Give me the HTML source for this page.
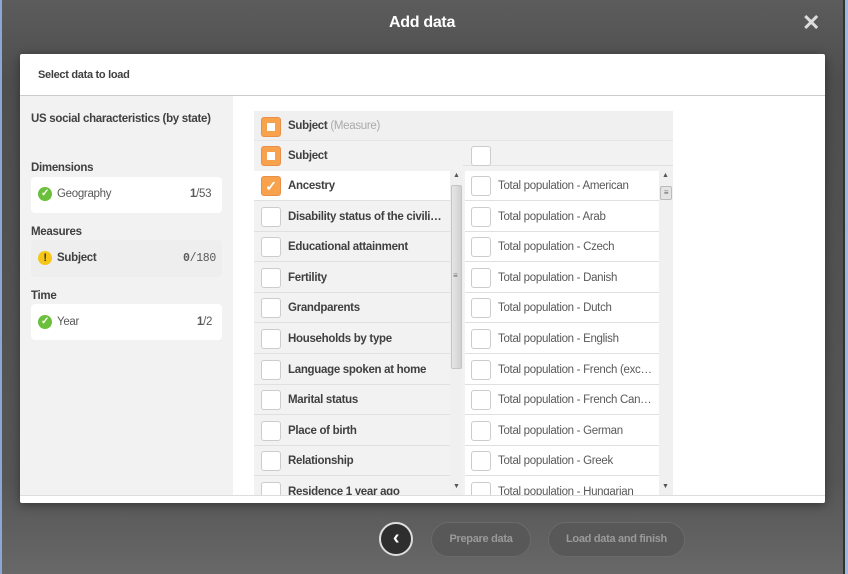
<!DOCTYPE html>
<html><head><meta charset="utf-8"><style>
*{box-sizing:border-box;margin:0;padding:0}
body{width:848px;height:574px;overflow:hidden;font-family:"Liberation Sans",sans-serif;background:linear-gradient(#5c5c5c,#4e4e4e 80px,#555 480px,#686868);position:relative;letter-spacing:-0.3px}
.a{position:absolute}
.t{font-size:11.5px;color:#404040;font-weight:bold;white-space:nowrap}
.n{font-size:11.5px;color:#595959;white-space:nowrap}
.cb{position:absolute;width:20px;height:20px;border:1px solid #ccc;border-radius:3px;background:#fff}
.row{position:absolute;height:30px;border-bottom:1px solid #e0e0e0}
.or{background:#f8a24d;border:1px solid #e8904a}
</style></head><body>
<div class="a" style="left:0;top:0;width:2px;height:574px;background:#8aa7d6"></div>
<div class="a" style="left:843px;top:0;width:2px;height:574px;background:#333"></div>
<div class="a" style="left:845px;top:0;width:3px;height:574px;background:#9fb8e0"></div>
<div class="a" style="left:389px;top:14px;color:#fff;font-weight:bold;font-size:16px">Add data</div>
<div class="a" style="left:802px;top:10px;color:#ddd;font-size:22px;font-weight:bold">✕</div>

<div class="a" style="left:20px;top:54px;width:805px;height:449px;background:#fff;border-radius:2px;box-shadow:0 2px 10px rgba(0,0,0,.4)"></div>
<div class="a t" style="left:38px;top:69px;font-size:11px">Select data to load</div>
<div class="a" style="left:20px;top:95px;width:805px;height:1px;background:#ccc"></div>
<div class="a" style="left:20px;top:96px;width:213px;height:399px;background:#f2f2f2"></div>
<div class="a" style="left:20px;top:495px;width:805px;height:1px;background:#ddd"></div>

<div class="a t" style="left:31px;top:113px">US social characteristics (by state)</div>
<div class="a t" style="left:31px;top:162px">Dimensions</div>
<div class="a" style="left:31px;top:177px;width:191px;height:36px;background:#fff;border-radius:4px"></div>
<div class="a" style="left:38px;top:187px;width:14px;height:14px;border-radius:50%;background:#6ac03a;color:#fff;font-size:10px;text-align:center;line-height:14px;font-weight:bold">✓</div>
<div class="a n" style="left:57px;top:188px">Geography</div>
<div class="a n" style="left:190px;top:188px"><b>1</b>/53</div>
<div class="a t" style="left:31px;top:226px">Measures</div>
<div class="a" style="left:31px;top:240px;width:191px;height:37px;background:#eee;border-radius:4px"></div>
<div class="a" style="left:38px;top:251px;width:14px;height:14px;border-radius:50%;background:#f5c518;color:#333;font-size:11px;text-align:center;line-height:14px;font-weight:bold">!</div>
<div class="a t" style="left:57px;top:252px">Subject</div>
<div class="a n" style="left:183px;top:252px;font-family:'Liberation Mono',monospace"><b>0</b>/180</div>
<div class="a t" style="left:31px;top:290px">Time</div>
<div class="a" style="left:31px;top:304px;width:191px;height:36px;background:#fff;border-radius:4px"></div>
<div class="a" style="left:38px;top:315px;width:14px;height:14px;border-radius:50%;background:#6ac03a;color:#fff;font-size:10px;text-align:center;line-height:14px;font-weight:bold">✓</div>
<div class="a n" style="left:57px;top:316px">Year</div>
<div class="a n" style="left:197px;top:316px"><b>1</b>/2</div>

<div class="a" style="left:254px;top:111px;width:419px;height:384px;background:#f2f2f2"></div>
<div class="a" style="left:254px;top:111px;width:419px;height:30px;background:#f0f0f0;border-bottom:1px solid #e6e6e6"></div>
<div class="cb or" style="left:261px;top:117px"><div class="a" style="left:5px;top:5px;width:8px;height:8px;background:#fff"></div></div>
<div class="a t" style="left:288px;top:120px">Subject <span style="color:#aaa;font-weight:normal">(Measure)</span></div>
<div class="cb or" style="left:261px;top:146px"><div class="a" style="left:5px;top:5px;width:8px;height:8px;background:#fff"></div></div>
<div class="a t" style="left:288px;top:150px">Subject</div>
<div class="a" style="left:463px;top:165px;width:210px;height:1px;background:#e0e0e0"></div>
<div class="cb" style="left:471px;top:146px"></div>

<div class="a" style="left:254px;top:171px;width:209px;height:324px;overflow:hidden">
<div class="row" style="left:0;top:0;width:196px;background:#fff"><div class="cb or" style="left:7px;top:5px;color:#fff;font-size:14px;text-align:center;line-height:18px;font-weight:bold">✓</div><div class="a t" style="left:34px;top:9px">Ancestry</div></div>
<div class="row" style="left:0;top:30.6px;width:196px"><div class="cb" style="left:7px;top:5px"></div><div class="a t" style="left:34px;top:9px">Disability status of the civili…</div></div>
<div class="row" style="left:0;top:61.2px;width:196px"><div class="cb" style="left:7px;top:5px"></div><div class="a t" style="left:34px;top:9px">Educational attainment</div></div>
<div class="row" style="left:0;top:91.8px;width:196px"><div class="cb" style="left:7px;top:5px"></div><div class="a t" style="left:34px;top:9px">Fertility</div></div>
<div class="row" style="left:0;top:122.4px;width:196px"><div class="cb" style="left:7px;top:5px"></div><div class="a t" style="left:34px;top:9px">Grandparents</div></div>
<div class="row" style="left:0;top:153px;width:196px"><div class="cb" style="left:7px;top:5px"></div><div class="a t" style="left:34px;top:9px">Households by type</div></div>
<div class="row" style="left:0;top:183.6px;width:196px"><div class="cb" style="left:7px;top:5px"></div><div class="a t" style="left:34px;top:9px">Language spoken at home</div></div>
<div class="row" style="left:0;top:214.2px;width:196px"><div class="cb" style="left:7px;top:5px"></div><div class="a t" style="left:34px;top:9px">Marital status</div></div>
<div class="row" style="left:0;top:244.8px;width:196px"><div class="cb" style="left:7px;top:5px"></div><div class="a t" style="left:34px;top:9px">Place of birth</div></div>
<div class="row" style="left:0;top:275.4px;width:196px"><div class="cb" style="left:7px;top:5px"></div><div class="a t" style="left:34px;top:9px">Relationship</div></div>
<div class="row" style="left:0;top:306px;width:196px"><div class="cb" style="left:7px;top:5px"></div><div class="a t" style="left:34px;top:9px">Residence 1 year ago</div></div>
<div class="a" style="left:196px;top:0;width:13px;height:324px;background:#f0f0f0"></div>
<div class="a" style="left:197px;top:14px;width:11px;height:184px;background:linear-gradient(90deg,#e6e6e6,#d0d0d0);border:1px solid #c4c4c4;border-radius:2px"></div>
<div class="a" style="left:199px;top:1px;font-size:7px;color:#555">▲</div>
<div class="a" style="left:199px;top:312px;font-size:7px;color:#555">▼</div>
<div class="a" style="left:199px;top:100px;font-size:8px;color:#666">≡</div>
</div>

<div class="a" style="left:465px;top:171px;width:208px;height:324px;overflow:hidden;background:#fff">
<div class="row" style="left:0;top:0;width:194px"><div class="cb" style="left:6px;top:5px"></div><div class="a n" style="left:33px;top:9px">Total population - American</div></div>
<div class="row" style="left:0;top:30.6px;width:194px"><div class="cb" style="left:6px;top:5px"></div><div class="a n" style="left:33px;top:9px">Total population - Arab</div></div>
<div class="row" style="left:0;top:61.2px;width:194px"><div class="cb" style="left:6px;top:5px"></div><div class="a n" style="left:33px;top:9px">Total population - Czech</div></div>
<div class="row" style="left:0;top:91.8px;width:194px"><div class="cb" style="left:6px;top:5px"></div><div class="a n" style="left:33px;top:9px">Total population - Danish</div></div>
<div class="row" style="left:0;top:122.4px;width:194px"><div class="cb" style="left:6px;top:5px"></div><div class="a n" style="left:33px;top:9px">Total population - Dutch</div></div>
<div class="row" style="left:0;top:153px;width:194px"><div class="cb" style="left:6px;top:5px"></div><div class="a n" style="left:33px;top:9px">Total population - English</div></div>
<div class="row" style="left:0;top:183.6px;width:194px"><div class="cb" style="left:6px;top:5px"></div><div class="a n" style="left:33px;top:9px">Total population - French (exc…</div></div>
<div class="row" style="left:0;top:214.2px;width:194px"><div class="cb" style="left:6px;top:5px"></div><div class="a n" style="left:33px;top:9px">Total population - French Can…</div></div>
<div class="row" style="left:0;top:244.8px;width:194px"><div class="cb" style="left:6px;top:5px"></div><div class="a n" style="left:33px;top:9px">Total population - German</div></div>
<div class="row" style="left:0;top:275.4px;width:194px"><div class="cb" style="left:6px;top:5px"></div><div class="a n" style="left:33px;top:9px">Total population - Greek</div></div>
<div class="row" style="left:0;top:306px;width:194px"><div class="cb" style="left:6px;top:5px"></div><div class="a n" style="left:33px;top:9px">Total population - Hungarian</div></div>
<div class="a" style="left:194px;top:0;width:14px;height:324px;background:#f0f0f0"></div>
<div class="a" style="left:195px;top:15px;width:12px;height:14px;background:#e4e4e4;border:1px solid #bbb;border-radius:2px;font-size:8px;color:#666;text-align:center;line-height:12px">≡</div>
<div class="a" style="left:197px;top:1px;font-size:7px;color:#555">▲</div>
<div class="a" style="left:197px;top:312px;font-size:7px;color:#555">▼</div>
</div>

<div class="a" style="left:379px;top:522px;width:34px;height:34px;border-radius:50%;background:#2e2e2e;border:2px solid #ddd;color:#fff;text-align:center;line-height:28px;font-size:20px;font-weight:bold">‹</div>
<div class="a" style="left:431px;top:522px;width:100px;height:35px;border-radius:18px;background:#585858;border:1px solid #6a6a6a;color:#9a9a9a;font-weight:bold;font-size:11px;text-align:center;line-height:33px">Prepare data</div>
<div class="a" style="left:548px;top:522px;width:137px;height:35px;border-radius:18px;background:#585858;border:1px solid #6a6a6a;color:#9a9a9a;font-weight:bold;font-size:11px;text-align:center;line-height:33px">Load data and finish</div>
</body></html>
